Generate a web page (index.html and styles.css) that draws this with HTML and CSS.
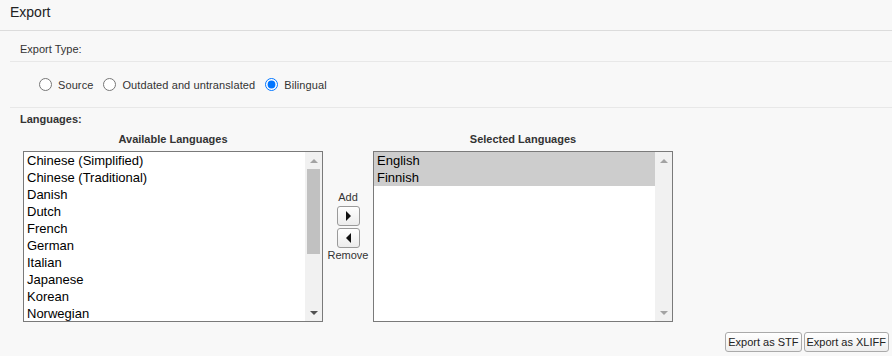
FILE: index.html
```html
<!DOCTYPE html>
<html lang="en">

<head>
    <meta charset="UTF-8">
    <title>Export</title>
    <link rel="stylesheet" href="styles.css">
</head>

<body>
    <div class="encabezado">Export</div>

    <div class="seccion">
        <div class="titulo-fila">Export Type:</div>

        <div class="opciones">
            <label class="opcion"><input type="radio" name="tipo" value="source"> Source</label>
            <label class="opcion"><input type="radio" name="tipo" value="outdated"> Outdated and untranslated</label>
            <label class="opcion"><input type="radio" name="tipo" value="bilingual" checked> Bilingual</label>
        </div>

        <div class="titulo-idiomas">Languages:</div>

        <div class="idiomas">
            <div class="columna">
                <div class="columna-titulo">Available Languages</div>
                <div class="lista">
                    <div class="items" id="disponibles">
                        <div class="item">Chinese (Simplified)</div>
                        <div class="item">Chinese (Traditional)</div>
                        <div class="item">Danish</div>
                        <div class="item">Dutch</div>
                        <div class="item">French</div>
                        <div class="item">German</div>
                        <div class="item">Italian</div>
                        <div class="item">Japanese</div>
                        <div class="item">Korean</div>
                        <div class="item">Norwegian</div>
                    </div>
                    <div class="barra">
                        <span class="flecha arriba inactiva"></span>
                        <div class="pista"><div class="pulgar"></div></div>
                        <span class="flecha abajo"></span>
                    </div>
                </div>
            </div>

            <div class="mover">
                <span>Add</span>
                <button class="btn-mover" id="agregar"><span class="tri derecha"></span></button>
                <button class="btn-mover" id="quitar"><span class="tri izquierda"></span></button>
                <span>Remove</span>
            </div>

            <div class="columna">
                <div class="columna-titulo">Selected Languages</div>
                <div class="lista">
                    <div class="items" id="seleccionados">
                        <div class="item seleccionado">English</div>
                        <div class="item seleccionado">Finnish</div>
                    </div>
                    <div class="barra">
                        <span class="flecha arriba inactiva"></span>
                        <div class="pista"></div>
                        <span class="flecha abajo inactiva"></span>
                    </div>
                </div>
            </div>
        </div>

        <div class="acciones">
            <button class="boton">Export as STF</button>
            <button class="boton">Export as XLIFF</button>
        </div>
    </div>

    <script>
        const disponibles = document.getElementById('disponibles');
        const seleccionados = document.getElementById('seleccionados');

        document.querySelectorAll('.lista .items').forEach((lista) => {
            lista.addEventListener('click', (e) => {
                if (e.target.classList.contains('item')) {
                    e.target.classList.toggle('seleccionado');
                }
            });
        });

        // Pasar los marcados de una lista a la otra
        function mover(origen, destino) {
            origen.querySelectorAll('.seleccionado').forEach((item) => {
                item.classList.remove('seleccionado');
                destino.appendChild(item);
            });
        }

        document.getElementById('agregar').addEventListener('click', () => mover(disponibles, seleccionados));
        document.getElementById('quitar').addEventListener('click', () => mover(seleccionados, disponibles));
    </script>
</body>

</html>
```

FILE: styles.css
```css
body {
    margin: 0;
    font-family: 'Liberation Sans', Arial, sans-serif;
    background-color: #f8f8f8;
    color: #333;
}

.encabezado {
    font-size: 14px;
    line-height: 24px;
    padding: 0 10px 6px;
    color: #222;
    border-bottom: 1px solid #dcdcdc;
}

.seccion {
    margin-left: 10px;
}

.titulo-fila {
    font-size: 11px;
    line-height: 13px;
    padding: 12px 10px 5px;
    border-bottom: 1px solid #e8e8e8;
}

.opciones {
    display: flex;
    align-items: center;
    height: 13px;
    padding: 16px 0 16px 29px;
    border-bottom: 1px solid #e8e8e8;
    font-size: 11px;
    letter-spacing: 0.1px;
}

.opcion {
    display: flex;
    align-items: center;
    gap: 6px;
    margin-right: 10px;
}

.opcion input {
    margin: 0;
    width: 13px;
    height: 13px;
}

.titulo-idiomas {
    font-size: 11px;
    line-height: 13px;
    font-weight: bold;
    padding: 5px 10px 0;
}

.idiomas {
    display: flex;
    margin-top: 7px;
    padding-left: 13px;
}

.columna {
    width: 300px;
}

.columna-titulo {
    font-size: 11px;
    line-height: 13px;
    font-weight: bold;
    text-align: center;
    margin-bottom: 5px;
}

.lista {
    display: flex;
    height: 169px;
    background-color: #ffffff;
    border: 1px solid #7a7a7a;
    overflow: hidden;
}

.items {
    flex: 1;
    font-size: 13px;
    color: #000;
}

.item {
    line-height: 17px;
    height: 17px;
    padding-left: 3px;
    white-space: nowrap;
    cursor: default;
}

.item:last-child {
    height: 16px;
}

.item.seleccionado {
    height: 17px;
    background-color: #cdcdcd;
}

.barra {
    display: flex;
    flex-direction: column;
    width: 17px;
    background-color: #f1f1f1;
}

.flecha {
    height: 17px;
    display: flex;
    align-items: center;
    justify-content: center;
}

.flecha::before {
    content: '';
    border-left: 4px solid transparent;
    border-right: 4px solid transparent;
}

.flecha.arriba::before {
    border-bottom: 4px solid #505050;
}

.flecha.abajo::before {
    border-top: 4px solid #505050;
}

.flecha.arriba.inactiva::before {
    border-bottom-color: #a3a3a3;
}

.flecha.abajo.inactiva::before {
    border-top-color: #a3a3a3;
}

.pista {
    flex: 1;
    padding: 0 2px;
}

.pulgar {
    height: 85px;
    background-color: #c1c1c1;
}

.mover {
    width: 50px;
    display: flex;
    flex-direction: column;
    align-items: center;
    gap: 2px;
    padding-top: 58px;
    font-size: 11px;
    line-height: 13px;
}

.mover span:last-child {
    margin-top: -1px;
}

.btn-mover {
    width: 23px;
    height: 20px;
    padding: 0;
    display: flex;
    align-items: center;
    justify-content: center;
    background: linear-gradient(#ffffff, #ececec);
    border: 1px solid #9a9a9a;
    border-radius: 3px;
    cursor: pointer;
}

.tri {
    border-top: 5px solid transparent;
    border-bottom: 5px solid transparent;
}

.tri.derecha {
    border-left: 5px solid #111;
}

.tri.izquierda {
    border-right: 5px solid #111;
}

.acciones {
    display: flex;
    justify-content: flex-end;
    gap: 2px;
    margin-top: 10px;
    padding-right: 3px;
}

.boton {
    height: 20px;
    padding: 0 2px;
    font-family: 'Liberation Sans', Arial, sans-serif;
    font-size: 11px;
    color: #222;
    background: linear-gradient(#ffffff, #eeeeee);
    border: 1px solid #aaaaaa;
    border-radius: 3px;
    cursor: pointer;
}

.boton:hover {
    background: #e6e6e6;
}
```
